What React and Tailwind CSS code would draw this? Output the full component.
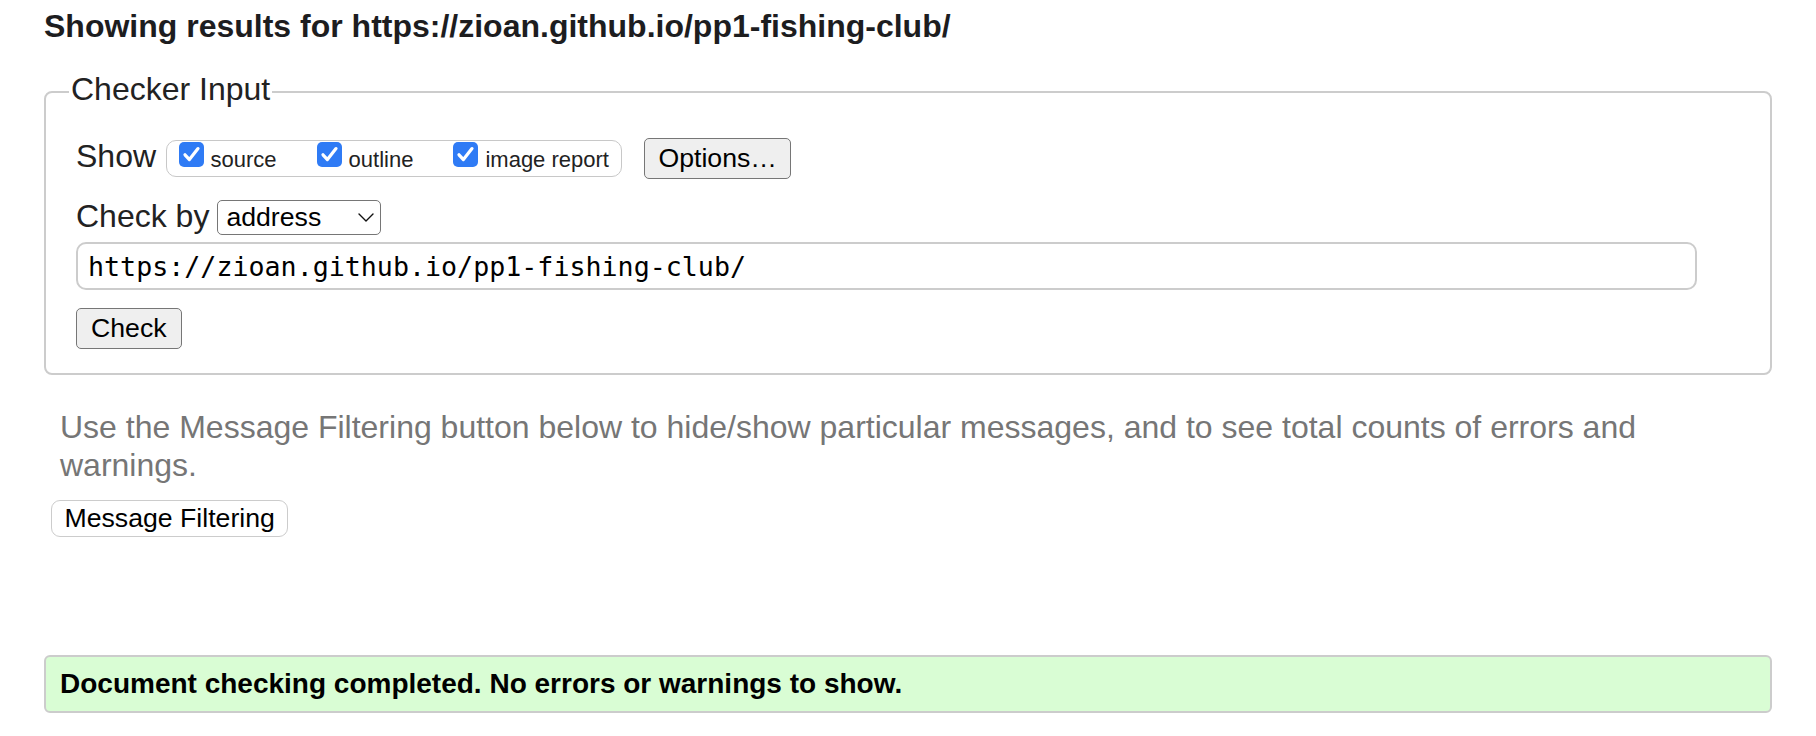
import React, { useState } from 'react';

const sans = { fontFamily: '"Liberation Sans", Arial, sans-serif' };

function Tick({ checked, onToggle, label }) {
  return (
    <label className="inline-flex items-baseline gap-[7px] cursor-pointer" onClick={onToggle}>
      <span
        className={
          'w-[25px] h-[25px] rounded-[5px] flex items-center justify-center shrink-0 ' +
          (checked ? 'bg-[#2f7bf5]' : 'bg-white border-[1.5px] border-[#767676]')
        }
      >
        {checked && (
          <svg width="25" height="25" viewBox="0 0 25 25">
            <path d="M6 12.8 L10.4 17.6 L19 6.6" fill="none" stroke="#fff" strokeWidth="3.2" strokeLinecap="round" strokeLinejoin="round" />
          </svg>
        )}
      </span>
      <span className="text-[22px] leading-[32px] text-[#222]">{label}</span>
    </label>
  );
}

function App() {
  const [show, setShow] = useState({ source: true, outline: true, image: true });
  const [checkBy, setCheckBy] = useState('address');
  const [url, setUrl] = useState('https://zioan.github.io/pp1-fishing-club/');

  const toggle = (k) => (e) => {
    e.preventDefault();
    setShow({ ...show, [k]: !show[k] });
  };

  return (
    <div className="min-h-screen bg-white px-[44px] text-[#222]" style={sans}>
      <h2 className="pt-[6px] text-[32px] leading-[40px] font-bold text-[#1d1d1f]">
        Showing results for https://zioan.github.io/pp1-fishing-club/
      </h2>

      {/* Checker input */}
      <fieldset className="mt-[28px] border-2 border-[#cccccc] rounded-[8px] pl-[30px] pr-[73px] pt-[28px] pb-[24px]">
        <legend className="-ml-[7px] px-[2px] text-[32px] leading-[36px]">
          <span className="inline-block -translate-y-[3px]">Checker Input</span>
        </legend>

        <div className="flex items-center h-[41px]">
          <span className="text-[32px] leading-[36px] pb-[5px]">Show</span>
          <div className="ml-[10px] h-[37px] flex items-center gap-[40px] pl-[11.5px] pr-[12px] border-[1.5px] border-[#c8c8c8] rounded-[10px]">
            <Tick checked={show.source} onToggle={toggle('source')} label="source" />
            <Tick checked={show.outline} onToggle={toggle('outline')} label="outline" />
            <Tick checked={show.image} onToggle={toggle('image')} label="image report" />
          </div>
          <button className="ml-[22px] h-[41px] px-[13.5px] bg-[#efefef] border-[1.5px] border-[#767676] rounded-[5px] text-[26.67px] leading-none text-black">
            Options…
          </button>
        </div>

        <div className="mt-[21px] flex items-center h-[35px]">
          <span className="text-[32px] leading-[36px] pb-[3px]">Check by</span>
          <div className="relative ml-[8px]">
            <select
              value={checkBy}
              onChange={(e) => setCheckBy(e.target.value)}
              className="appearance-none w-[164px] h-[35px] pl-[8px] bg-white border-[1.5px] border-[#767676] rounded-[5px] text-[26.67px] leading-none text-black outline-none"
              style={sans}
            >
              <option value="address">address</option>
              <option value="upload">file upload</option>
              <option value="input">text input</option>
            </select>
            <svg className="absolute right-[7px] top-[13px] pointer-events-none" width="16" height="9" viewBox="0 0 16 9">
              <path d="M1 1 L8 8 L15 1" fill="none" stroke="#111" strokeWidth="1.4" strokeLinecap="round" strokeLinejoin="round" />
            </svg>
          </div>
        </div>

        <input
          value={url}
          onChange={(e) => setUrl(e.target.value)}
          className="mt-[7px] block w-full h-[48px] pl-[10px] border-2 border-[#cccccc] rounded-[10px] text-[26.67px] text-black outline-none"
          style={{ fontFamily: '"DejaVu Sans Mono", "Liberation Mono", monospace' }}
        />

        <button className="mt-[18px] block h-[41px] px-[14px] bg-[#efefef] border-[1.5px] border-[#767676] rounded-[5px] text-[26.67px] leading-none text-black">
          Check
        </button>
      </fieldset>

      <p className="mt-[33px] ml-[16px] mr-[16px] text-[32px] leading-[38px] text-[#767676]">
        Use the Message Filtering button below to hide/show particular messages, and to see total counts of errors and warnings.
      </p>

      <button className="mt-[16px] ml-[7px] block h-[37px] px-[12.5px] bg-white border-[1.5px] border-[#cccccc] rounded-[9px] text-[26.67px] leading-none text-black">
        Message Filtering
      </button>

      <div className="mt-[118px] h-[58px] flex items-center pl-[14px] bg-[#d9fdd4] border-2 border-[#cccccc] rounded-[6px]">
        <p className="text-[28px] font-bold text-black">Document checking completed. No errors or warnings to show.</p>
      </div>
    </div>
  );
}

export default App;
